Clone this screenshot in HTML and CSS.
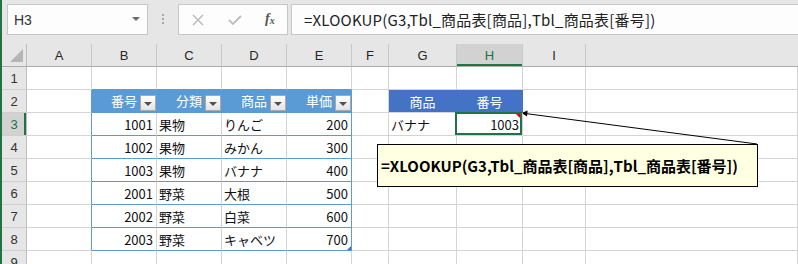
FILE: index.html
```html
<!DOCTYPE html>
<html lang="ja">
<head>
<meta charset="utf-8">
<title>XLOOKUP</title>
<link rel="stylesheet" href="styles.css">
</head>
<body>
<div class="app">
  <div class="toolbar">
    <div class="namebox"><span>H3</span><i class="nb-arrow"></i></div>
    <div class="dots"><i></i><i></i><i></i></div>
    <div class="fxbox">
      <svg class="ic-x" width="12" height="12" viewBox="0 0 12 12"><path d="M1 1L11 11M11 1L1 11" stroke="#bdbdbd" stroke-width="1.6" fill="none"/></svg>
      <svg class="ic-ok" width="14" height="10" viewBox="0 0 14 10"><path d="M1 5L5 9L13 1" stroke="#bdbdbd" stroke-width="1.8" fill="none"/></svg>
      <span class="fx">f<sub>x</sub></span>
    </div>
    <div class="formula">=XLOOKUP(G3,Tbl_商品表[商品],Tbl_商品表[番号])</div>
  </div>

  <div class="grid">
    <!-- column header row -->
    <div class="c corner"><i></i></div>
    <div class="c ch">A</div><div class="c ch">B</div><div class="c ch">C</div><div class="c ch">D</div><div class="c ch">E</div><div class="c ch">F</div><div class="c ch">G</div><div class="c ch sel">H</div><div class="c ch">I</div><div class="c ch last"></div>

    <!-- row 1 -->
    <div class="c rh">1</div>
    <div class="c"></div><div class="c bt"></div><div class="c bt"></div><div class="c bt"></div><div class="c bt"></div><div class="c"></div><div class="c"></div><div class="c"></div><div class="c"></div><div class="c"></div>

    <!-- row 2 -->
    <div class="c rh">2</div>
    <div class="c bl"></div>
    <div class="c th"><span>番号</span><b class="dd"></b></div>
    <div class="c th"><span>分類</span><b class="dd"></b></div>
    <div class="c th"><span>商品</span><b class="dd"></b></div>
    <div class="c th th-end"><span>単価</span><b class="dd"></b></div>
    <div class="c"></div>
    <div class="c h2">商品</div>
    <div class="c h2">番号</div>
    <div class="c"></div><div class="c"></div>

    <!-- row 3 -->
    <div class="c rh rsel">3</div>
    <div class="c bl"></div>
    <div class="c tb n">1001</div><div class="c tb">果物</div><div class="c tb">りんご</div><div class="c tb n te">200</div>
    <div class="c"></div>
    <div class="c">バナナ</div>
    <div class="c n active">1003</div>
    <div class="c"></div><div class="c"></div>

    <!-- row 4 -->
    <div class="c rh">4</div>
    <div class="c bl"></div>
    <div class="c tb n">1002</div><div class="c tb">果物</div><div class="c tb">みかん</div><div class="c tb n te">300</div>
    <div class="c"></div><div class="c"></div><div class="c"></div><div class="c"></div><div class="c"></div>

    <!-- row 5 -->
    <div class="c rh">5</div>
    <div class="c bl"></div>
    <div class="c tb n">1003</div><div class="c tb">果物</div><div class="c tb">バナナ</div><div class="c tb n te">400</div>
    <div class="c"></div><div class="c"></div><div class="c"></div><div class="c"></div><div class="c"></div>

    <!-- row 6 -->
    <div class="c rh">6</div>
    <div class="c bl"></div>
    <div class="c tb n">2001</div><div class="c tb">野菜</div><div class="c tb">大根</div><div class="c tb n te">500</div>
    <div class="c"></div><div class="c"></div><div class="c"></div><div class="c"></div><div class="c"></div>

    <!-- row 7 -->
    <div class="c rh">7</div>
    <div class="c bl"></div>
    <div class="c tb n">2002</div><div class="c tb">野菜</div><div class="c tb">白菜</div><div class="c tb n te">600</div>
    <div class="c"></div><div class="c"></div><div class="c"></div><div class="c"></div><div class="c"></div>

    <!-- row 8 -->
    <div class="c rh">8</div>
    <div class="c bl"></div>
    <div class="c tb n">2003</div><div class="c tb">野菜</div><div class="c tb">キャベツ</div><div class="c tb n te resize">700</div>
    <div class="c"></div><div class="c"></div><div class="c"></div><div class="c"></div><div class="c"></div>

    <!-- row 9 -->
    <div class="c rh">9</div>
    <div class="c"></div><div class="c"></div><div class="c"></div><div class="c"></div><div class="c"></div><div class="c"></div><div class="c"></div><div class="c"></div><div class="c"></div><div class="c"></div>
  </div>
</div>

<svg class="arrow" width="798" height="264" viewBox="0 0 798 264">
  <line x1="526" y1="113.6" x2="757" y2="144" stroke="#000" stroke-width="1"/>
  <polygon points="521.5,113 527.6,110.6 527,116.6" fill="#000"/>
</svg>

<div class="callout">=XLOOKUP(G3,Tbl_商品表[商品],Tbl_商品表[番号])</div>
</body>
</html>
```

FILE: styles.css
```css
* { box-sizing: border-box; }

html, body {
  margin: 0;
  padding: 0;
}

body {
  width: 798px;
  height: 264px;
  overflow: hidden;
  position: relative;
  background: #e6e6e6;
  font-family: "Noto Sans CJK JP", "Noto Sans", sans-serif;
}

.app {
  border-left: 2px solid #217346;
  height: 264px;
  display: flex;
  flex-direction: column;
}

/* ---------- toolbar ---------- */
.toolbar {
  height: 44px;
  flex: none;
  display: flex;
  align-items: flex-start;
  padding: 4px 0 0 5px;
  background: #e6e6e6;
}

.namebox {
  width: 141px;
  height: 31px;
  background: #fdfdfd;
  border: 1px solid #c6c6c6;
  display: flex;
  align-items: center;
  padding-left: 6px;
  font-family: "Liberation Sans", sans-serif;
  font-size: 14px;
  color: #333;
  position: relative;
}

.nb-arrow {
  position: absolute;
  right: 7px;
  top: 12px;
  width: 0;
  height: 0;
  border-left: 4px solid transparent;
  border-right: 4px solid transparent;
  border-top: 4px solid #6e6e6e;
}

.dots {
  margin: 10px 14px 0 14px;
  width: 2px;
  display: flex;
  flex-direction: column;
  gap: 2px;
}
.dots i {
  display: block;
  width: 2px;
  height: 2px;
  background: #a8a8a8;
}

.fxbox {
  width: 110px;
  height: 31px;
  background: #fdfdfd;
  border: 1px solid #c6c6c6;
  display: flex;
  align-items: center;
  padding-left: 13px;
}
.ic-x { margin-top: 1px; }
.ic-ok { margin-left: 24px; margin-top: 1px; }
.fx {
  margin-left: 23px;
  font-family: "Liberation Serif", serif;
  font-style: italic;
  font-weight: bold;
  font-size: 14px;
  color: #555;
  margin-top: -2px;
}
.fx sub {
  font-size: 10px;
  vertical-align: -1px;
}

.formula {
  margin-left: 3px;
  flex: 1;
  height: 31px;
  background: #fdfdfd;
  border: 1px solid #c6c6c6;
  border-right: none;
  display: flex;
  align-items: center;
  padding-left: 12px;
  font-size: 15px;
  letter-spacing: 0.2px;
  color: #222;
  white-space: nowrap;
}

/* ---------- grid ---------- */
.grid {
  flex: none;
  display: grid;
  grid-template-columns: 25px 65px 65px 65px 65px 65px 37px 68px 66px 63px 1fr;
  grid-auto-rows: 23px;
  background: #fff;
}

.c {
  border-right: 1px solid #d4d4d4;
  border-bottom: 1px solid #d4d4d4;
  display: flex;
  align-items: center;
  padding: 0 2px;
  font-size: 13px;
  color: #111;
  white-space: nowrap;
  overflow: hidden;
}

.n {
  justify-content: flex-end;
  padding-right: 3px;
}

.corner {
  background: #e6e6e6;
  border-right-color: #bdbdbd;
  border-bottom-color: #ababab;
  position: relative;
}
.corner i {
  position: absolute;
  right: 3px;
  bottom: 4px;
  width: 0;
  height: 0;
  border-left: 13px solid transparent;
  border-bottom: 13px solid #b5b5b5;
}

.ch {
  background: #e6e6e6;
  justify-content: center;
  border-right-color: #c8c8c8;
  border-bottom-color: #ababab;
  color: #262626;
  font-family: "Liberation Sans", sans-serif;
  font-size: 13px;
}
.ch.last { border-right: none; }
.ch.sel {
  background: #d2d2d2;
  color: #217346;
  box-shadow: inset 0 -2px 0 #217346;
}

.rh {
  background: #e6e6e6;
  justify-content: center;
  border-right-color: #bdbdbd;
  border-bottom-color: #cfcfcf;
  color: #333;
  font-family: "Liberation Sans", sans-serif;
  font-size: 13px;
}
.rh.rsel {
  background: #d2d2d2;
  color: #217346;
  box-shadow: inset -2px 0 0 #217346;
}

/* ---------- table ---------- */
.bt { border-bottom-color: #5b9bd5; }
.bl { border-right-color: #5b9bd5; }

.th {
  background: #5b9bd5;
  border-right-color: #5b9bd5;
  border-bottom-color: #5b9bd5;
  color: #fff;
  justify-content: flex-end;
  gap: 3px;
  padding-right: 0;
}
.th span { margin-top: -1px; }

.dd {
  align-self: flex-end;
  margin-bottom: 1px;
  width: 16px;
  height: 16px;
  flex: none;
  border: 1px solid #a9a9a9;
  background: linear-gradient(#ffffff, #e3e3e3);
  position: relative;
}
.dd::after {
  content: "";
  position: absolute;
  left: 3px;
  top: 6px;
  border-left: 4px solid transparent;
  border-right: 4px solid transparent;
  border-top: 4px solid #505050;
}

.tb { border-bottom-color: #5b9bd5; }
.te { border-right-color: #5b9bd5; }

.resize { position: relative; }
.resize::after {
  content: "";
  position: absolute;
  right: 0;
  bottom: 0;
  border-left: 4px solid transparent;
  border-bottom: 4px solid #4472c4;
}

.h2 {
  background: #4472c4;
  border-right-color: #4472c4;
  color: #fff;
  justify-content: center;
}

.active {
  position: relative;
  overflow: visible;
  z-index: 1;
  background-image: linear-gradient(#217346, #217346);
  background-size: 5px 5px;
  background-position: right -2px bottom -3px;
  background-repeat: no-repeat;
}
.active::after {
  content: "";
  position: absolute;
  top: -1px;
  left: -2px;
  right: 0;
  bottom: 0;
  border: 2px solid #217346;
}
.active::before {
  content: "";
  position: absolute;
  right: 2px;
  top: 1px;
  border-left: 4px solid transparent;
  border-top: 4px solid #e00000;
}

/* ---------- overlay ---------- */
.arrow {
  position: absolute;
  left: 0;
  top: 0;
  pointer-events: none;
}

.callout {
  position: absolute;
  left: 377px;
  top: 144px;
  width: 381px;
  height: 43px;
  background: #ffffe1;
  border: 1px solid #000;
  display: flex;
  align-items: center;
  padding-left: 3px;
  font-weight: bold;
  font-size: 15px;
  color: #000;
  white-space: nowrap;
}
```
